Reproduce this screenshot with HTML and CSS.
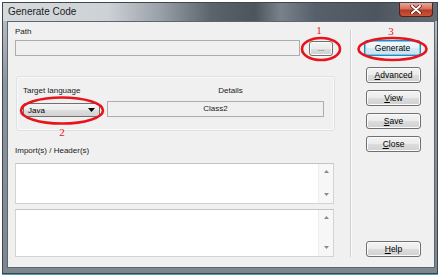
FILE: index.html
```html
<!DOCTYPE html>
<html lang="en">
<head>
    <meta charset="UTF-8">
    <title>Generate Code</title>
    <link rel="stylesheet" href="styles.css">
</head>
<body>
    <div class="window">
        <div class="titlebar">
            <span class="title">Generate Code</span>
            <span class="close-btn">
                <svg width="12" height="9" viewBox="0 0 12 9">
                    <path d="M2 1 L10 8 M10 1 L2 8" stroke="#4a1208" stroke-width="3.4" stroke-linecap="round"/>
                    <path d="M2 1 L10 8 M10 1 L2 8" stroke="#fff" stroke-width="2" stroke-linecap="round"/>
                </svg>
            </span>
        </div>

        <div class="client">
            <div class="main">
                <div class="lbl">Path</div>
                <div class="path-row">
                    <div class="field path-field"></div>
                    <button class="btn browse">...</button>
                </div>

                <div class="group">
                    <div class="lbl">Target language</div>
                    <div class="lbl details-lbl">Details</div>
                    <div class="combo">
                        <span>Java</span>
                        <svg width="7" height="4" viewBox="0 0 7 4"><path d="M0 0 H7 L3.5 4 Z" fill="#000"/></svg>
                    </div>
                    <div class="field details-field">Class2</div>
                </div>

                <div class="lbl imports-lbl">Import(s) / Header(s)</div>
                <div class="memo memo-top">
                    <div class="memo-text"></div>
                    <div class="memo-scroll">
                        <svg width="5" height="3" viewBox="0 0 5 3"><path d="M0 3 H5 L2.5 0 Z" fill="#8a8a8a"/></svg>
                        <svg width="5" height="3" viewBox="0 0 5 3"><path d="M0 0 H5 L2.5 3 Z" fill="#8a8a8a"/></svg>
                    </div>
                </div>
                <div class="memo memo-bottom">
                    <div class="memo-text"></div>
                    <div class="memo-scroll">
                        <svg width="5" height="3" viewBox="0 0 5 3"><path d="M0 3 H5 L2.5 0 Z" fill="#8a8a8a"/></svg>
                        <svg width="5" height="3" viewBox="0 0 5 3"><path d="M0 0 H5 L2.5 3 Z" fill="#8a8a8a"/></svg>
                    </div>
                </div>
            </div>

            <div class="separator"></div>

            <div class="actions">
                <button class="btn btn-default">Generate</button>
                <button class="btn advanced"><u>A</u>dvanced</button>
                <button class="btn"><u>V</u>iew</button>
                <button class="btn"><u>S</u>ave</button>
                <button class="btn"><u>C</u>lose</button>
                <button class="btn help"><u>H</u>elp</button>
            </div>
        </div>
    </div>

    <!-- red annotation marks drawn over the dialog -->
    <svg class="marks" width="440" height="276" viewBox="0 0 440 276">
        <ellipse cx="321" cy="49" rx="19" ry="11"/>
        <ellipse cx="392.5" cy="49" rx="34" ry="11"/>
        <ellipse cx="62" cy="110.5" rx="41" ry="13"/>
        <text x="319" y="34">1</text>
        <text x="391" y="35">3</text>
        <text x="62" y="136">2</text>
    </svg>
</body>
</html>
```

FILE: styles.css
```css
* {
    box-sizing: border-box;
}

body {
    margin: 0;
    width: 440px;
    height: 276px;
    background: #fff;
    font-family: "Liberation Sans", Arial, sans-serif;
    position: relative;
    overflow: hidden;
}

.window {
    margin: 2px 0 0 2px;
    width: 436px;
    height: 272px;
    border: 1px solid #3e4750;
    border-bottom-color: #39454e;
    padding: 0 2px 5px 4px;
    display: flex;
    flex-direction: column;
    background: linear-gradient(180deg, #bfc5cb 0, #8d959c 30%, #7f878e 100%);
    box-shadow: 0 1px 0 #4f9fbb;
}

.titlebar {
    height: 18px;
    margin: 0 -2px 0 -4px;
    padding-left: 5px;
    display: flex;
    justify-content: space-between;
    align-items: flex-start;
    background: linear-gradient(90deg, #d6dadd 0, #cdd2d6 24%, #9aa1a8 36%, #5c646b 48%, #4d555c 58%, #79818a 64%, #57606a 72%, #4d565e 86%, #646c74 100%);
}

.title {
    font-size: 10px;
    line-height: 18px;
    color: #1c1c1c;
}

.close-btn {
    width: 34px;
    height: 14px;
    margin-right: 4px;
    border: 1px solid #5b1d14;
    border-top: none;
    border-radius: 0 0 4px 4px;
    background: linear-gradient(180deg, #e6a89b 0, #d3705c 45%, #b93a22 55%, #c9563c 100%);
    display: flex;
    align-items: center;
    justify-content: center;
}

.client {
    flex: 1;
    display: flex;
    background: #f0f0f0;
    border: 1px solid #5d666e;
}

.main {
    width: 320px;
    margin-left: 7px;
    padding-top: 5px;
    display: flex;
    flex-direction: column;
}

.lbl {
    font-size: 8px;
    line-height: 10px;
    color: #1a1a1a;
}

.path-row {
    margin-top: 3px;
    width: 318px;
    display: flex;
    align-items: flex-end;
    justify-content: space-between;
}

.field {
    height: 16px;
    border: 1px solid #adadad;
    background: #f0f0f0;
    font-size: 8px;
    line-height: 14px;
    color: #1a1a1a;
}

.path-field {
    width: 285px;
}

.group {
    margin: 20px 0 0 1px;
    width: 319px;
    height: 55px;
    padding: 9px 9px 0 6px;
    border: 1px solid #dbe1e6;
    border-radius: 3px;
    box-shadow: inset 0 0 0 1px #fafafa;
    display: grid;
    grid-template-columns: 77px 217px;
    grid-template-rows: 10px 21px;
    column-gap: 7px;
    align-items: end;
}

.details-lbl {
    text-align: center;
    padding-left: 30px;
}

.combo {
    height: 14px;
    margin-bottom: 0;
    padding: 0 4px 0 4px;
    border: 1px solid #707070;
    border-radius: 2px;
    background: linear-gradient(180deg, #f4f4f4 0, #ececec 50%, #dedede 50%, #d2d2d2 100%);
    display: flex;
    align-items: center;
    justify-content: space-between;
    font-size: 8px;
    color: #000;
}

.details-field {
    text-align: center;
}

.imports-lbl {
    margin-top: 15px;
}

.memo {
    width: 319px;
    display: flex;
    background: #fff;
    border: 1px solid #d3d3d3;
    border-top-color: #c4c4c4;
}

.memo-top {
    margin-top: 7px;
    height: 41px;
}

.memo-bottom {
    margin-top: 5px;
    height: 48px;
}

.memo-text {
    flex: 1;
}

.memo-scroll {
    width: 15px;
    padding: 6px 0 7px;
    background: #f7f7f7;
    border-left: 1px solid #ededed;
    display: flex;
    flex-direction: column;
    justify-content: space-between;
    align-items: center;
}

.separator {
    width: 2px;
    margin: 8px 0 10px 15px;
    border-left: 1px solid #cfcfcf;
    border-right: 1px solid #fbfbfb;
}

.actions {
    width: 57px;
    margin-left: 12px;
    padding: 18px 0 10px;
    display: flex;
    flex-direction: column;
    gap: 7px;
}

.btn {
    width: 56px;
    height: 16px;
    padding: 0;
    border: 1px solid #707070;
    border-radius: 3px;
    background: linear-gradient(180deg, #f3f3f3 0, #ebebeb 50%, #dddddd 50%, #d0d0d0 100%);
    box-shadow: inset 0 0 0 1px #fbfbfb;
    font-family: "Liberation Sans", Arial, sans-serif;
    font-size: 8.5px;
    color: #000;
}

.browse {
    width: 24px;
    height: 15px;
    font-size: 8px;
    line-height: 8px;
    color: #333;
}

.btn-default {
    width: 57px;
    border-color: #3c7fb1;
    background: linear-gradient(180deg, #f2f9fc 0, #e6f3f9 50%, #d6eaf4 50%, #cae2ee 100%);
    box-shadow: inset 0 0 0 1px #5fd2f5;
}

.advanced {
    margin-top: 4px;
    align-self: flex-end;
    width: 55px;
}

.actions .btn:not(.btn-default):not(.advanced) {
    align-self: flex-end;
    width: 55px;
}

.help {
    margin-top: auto;
}

.marks {
    position: absolute;
    left: 0;
    top: 0;
    pointer-events: none;
}

.marks ellipse {
    fill: none;
    stroke: #e8141c;
    stroke-width: 2.6;
}

.marks text {
    fill: #e8141c;
    font-family: "Liberation Serif", "Times New Roman", serif;
    font-size: 11px;
    text-anchor: middle;
}
```
